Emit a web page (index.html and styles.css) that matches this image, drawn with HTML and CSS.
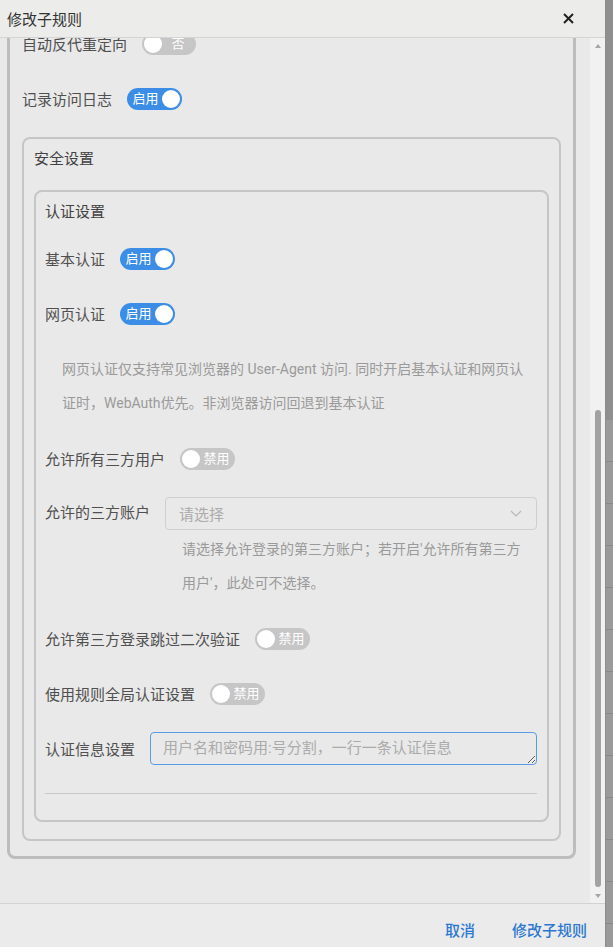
FILE: index.html
```html
<!DOCTYPE html>
<html>

<head>
  <meta charset="utf-8">
  <title>修改子规则</title>
  <link rel="stylesheet" href="styles.css">
</head>

<body>
  <div class="screen">
    <div class="dialog">
      <div class="dialog-header">
        <span class="dialog-title">修改子规则</span>
        <button class="dialog-close" aria-label="关闭">
          <svg width="11" height="11" viewBox="0 0 11 11"><path d="M1 1 L10 10 M10 1 L1 10" stroke="#222" stroke-width="2" fill="none"/></svg>
        </button>
      </div>

      <div class="dialog-body">
        <div class="dialog-scroll">
          <div class="group group-main">
            <div class="form-row">
              <span class="form-label">自动反代重定向</span>
              <span class="switch switch-short"><span class="switch-knob"></span><span class="switch-text">否</span></span>
            </div>
            <div class="form-row">
              <span class="form-label">记录访问日志</span>
              <span class="switch is-on"><span class="switch-text">启用</span><span class="switch-knob"></span></span>
            </div>

            <div class="group group-security">
              <div class="group-title">安全设置</div>

              <div class="group group-auth">
                <div class="group-title group-title-auth">认证设置</div>

                <div class="form-row">
                  <span class="form-label">基本认证</span>
                  <span class="switch is-on"><span class="switch-text">启用</span><span class="switch-knob"></span></span>
                </div>
                <div class="form-row">
                  <span class="form-label">网页认证</span>
                  <span class="switch is-on"><span class="switch-text">启用</span><span class="switch-knob"></span></span>
                </div>
                <div class="form-help">网页认证仅支持常见浏览器的 User-Agent 访问. 同时开启基本认证和网页认证时，WebAuth优先。非浏览器访问回退到基本认证</div>

                <div class="form-row">
                  <span class="form-label">允许所有三方用户</span>
                  <span class="switch"><span class="switch-knob"></span><span class="switch-text">禁用</span></span>
                </div>
                <div class="form-row form-row-tall">
                  <span class="form-label">允许的三方账户</span>
                  <div class="form-field">
                    <div class="form-select">
                      <span class="form-select-placeholder">请选择</span>
                      <svg width="12" height="7" viewBox="0 0 12 7"><path d="M1 1 L6 6 L11 1" stroke="#b8b8b8" stroke-width="1.2" fill="none"/></svg>
                    </div>
                    <div class="form-help form-help-field">请选择允许登录的第三方账户；若开启'允许所有第三方用户'，此处可不选择。</div>
                  </div>
                </div>
                <div class="form-row">
                  <span class="form-label">允许第三方登录跳过二次验证</span>
                  <span class="switch"><span class="switch-knob"></span><span class="switch-text">禁用</span></span>
                </div>
                <div class="form-row">
                  <span class="form-label">使用规则全局认证设置</span>
                  <span class="switch"><span class="switch-knob"></span><span class="switch-text">禁用</span></span>
                </div>
                <div class="form-row form-row-last">
                  <span class="form-label">认证信息设置</span>
                  <textarea class="form-textarea" placeholder="用户名和密码用:号分割，一行一条认证信息"></textarea>
                </div>
                <div class="divider"></div>
              </div>
            </div>
          </div>
        </div>

        <div class="scrollbar">
          <div class="scrollbar-button"><span class="arrow-up"></span></div>
          <div class="scrollbar-track"><div class="scrollbar-thumb"></div></div>
          <div class="scrollbar-button"><span class="arrow-down"></span></div>
        </div>
      </div>

      <div class="dialog-footer">
        <button class="text-button">取消</button>
        <button class="text-button">修改子规则</button>
      </div>
    </div>

    <div class="backdrop-page">
      <div class="backdrop-head"></div>
      <div class="backdrop-row"></div>
      <div class="backdrop-row"></div>
      <div class="backdrop-row"></div>
      <div class="backdrop-row"></div>
      <div class="backdrop-row"></div>
      <div class="backdrop-row"></div>
      <div class="backdrop-row"></div>
      <div class="backdrop-row"></div>
      <div class="backdrop-row"></div>
      <div class="backdrop-row"></div>
      <div class="backdrop-row"></div>
      <div class="backdrop-row"></div>
    </div>
  </div>
</body>
</html>
```

FILE: styles.css
```css
html, body { margin: 0; padding: 0; height: 100%; overflow: hidden; }

body {
  font-family: Roboto, "Noto Sans CJK SC", sans-serif;
  background: #979797;
}

.screen {
  display: flex;
  height: 100vh;
}

/* dialog */

.dialog {
  width: 605px;
  flex-shrink: 0;
  display: flex;
  flex-direction: column;
  background: #e9e9e9;
}

.dialog-header {
  height: 37px;
  flex-shrink: 0;
  display: flex;
  align-items: center;
  justify-content: space-between;
  padding: 0 31px 0 7px;
  border-bottom: 1px solid #d4d4d4;
  background: #ececeb;
}

.dialog-title {
  font-size: 15px;
  color: #333;
}

.dialog-close {
  border: none;
  background: none;
  padding: 0;
  display: flex;
  cursor: pointer;
}

.dialog-body {
  flex: 1;
  min-height: 0;
  display: flex;
}

/* the body is scrolled to its end: content sits at the bottom, the top is clipped */
.dialog-scroll {
  flex: 1;
  min-width: 0;
  overflow: hidden;
  display: flex;
  flex-direction: column;
  justify-content: flex-end;
}

.scrollbar {
  width: 15px;
  flex-shrink: 0;
  display: flex;
  flex-direction: column;
  background: #f1f1f1;
}

.scrollbar-button {
  height: 15px;
  display: flex;
  align-items: center;
  justify-content: center;
}

.arrow-up,
.arrow-down {
  width: 0;
  height: 0;
  border-left: 3px solid transparent;
  border-right: 3px solid transparent;
}

.arrow-up {
  border-bottom: 4px solid #a6a6a6;
}

.arrow-down {
  border-top: 4px solid #a6a6a6;
}

.scrollbar-track {
  flex: 1;
  display: flex;
  flex-direction: column;
  justify-content: flex-end;
  padding-bottom: 1px;
}

.scrollbar-thumb {
  height: 477px;
  width: 6px;
  margin-left: 5px;
  border-radius: 3px;
  background: #a2a2a2;
}

.dialog-footer {
  height: 44px;
  flex-shrink: 0;
  box-sizing: border-box;
  display: flex;
  justify-content: flex-end;
  gap: 37px;
  padding: 16px 18px 0;
  border-top: 1px solid #d2d2d2;
  background: #ebebeb;
}

.text-button {
  border: none;
  background: none;
  padding: 0;
  font-family: inherit;
  font-size: 15px;
  font-weight: 500;
  line-height: 22px;
  height: 22px;
  color: #2c78cf;
  cursor: pointer;
}

/* groups */

.group {
  border-radius: 8px;
}

.group-main {
  flex-shrink: 0;
  border: 3px solid #bdbdbd;
  padding: 10px 12px 15px 12px;
  margin: 0 14px 44px 7px;
}

.group-security {
  border: 2px solid #c6c6c6;
  padding: 10px 10px 17px 10px;
}

.group-auth {
  border: 2px solid #c6c6c6;
  padding: 10px 10px 26px 9px;
}

.group-title {
  font-size: 15px;
  line-height: 20px;
  color: #424242;
  margin-bottom: 21px;
}

.group-title-auth {
  margin-bottom: 20px;
}

/* form rows */

.form-row {
  display: flex;
  align-items: center;
  height: 33px;
  margin-bottom: 22px;
}

.form-row-tall {
  height: auto;
  align-items: flex-start;
}

.form-row-tall .form-label {
  line-height: 33px;
}

.form-row-last {
  margin-bottom: 28px;
}

.form-label {
  font-size: 15px;
  color: #505050;
  padding-right: 15px;
  white-space: nowrap;
}

.form-field {
  flex: 1;
  min-width: 0;
}

.form-select {
  height: 33px;
  box-sizing: border-box;
  border: 1px solid #cfcfcf;
  border-radius: 4px;
  display: flex;
  align-items: center;
  justify-content: space-between;
  padding: 0 14px 0 13px;
}

.form-select-placeholder {
  font-size: 15px;
  color: #ababab;
}

.form-textarea {
  flex: 1;
  height: 33px;
  box-sizing: border-box;
  border: 1px solid #5b9be2;
  border-radius: 4px;
  background: transparent;
  padding: 5px 12px;
  font-family: inherit;
  font-size: 15px;
  line-height: 21px;
  color: #555;
  resize: vertical;
  outline: none;
}

.form-textarea::placeholder {
  color: #ababab;
}

.form-help {
  padding-left: 17px;
  font-size: 14px;
  line-height: 34px;
  color: #9a9a9a;
  margin-bottom: 22px;
}

.form-help-field {
  padding-right: 6px;
  margin: 2px 0 0;
}

.divider {
  border-top: 1px solid #c8c8c8;
}

/* switch */

.switch {
  display: inline-flex;
  align-items: center;
  flex-shrink: 0;
  width: 55px;
  height: 22px;
  box-sizing: border-box;
  padding: 0 2px;
  border-radius: 11px;
  background: #c6c6c6;
}

.switch.is-on {
  background: #3b8de5;
}

.switch-short {
  width: 54px;
}

.switch-text {
  flex: 1;
  text-align: center;
  font-size: 13px;
  line-height: 22px;
  color: #fff;
}

.switch-knob {
  width: 18px;
  height: 18px;
  border-radius: 50%;
  background: #fff;
}

/* page behind the dialog */

.backdrop-page {
  flex: 1;
  background: #9a9a9a;
  border-left: 1px solid #8c8c8c;
}

.backdrop-head {
  height: 420px;
  background: #8f8f8f;
}

.backdrop-row {
  height: 41px;
  border-bottom: 1px solid #888;
}
```
